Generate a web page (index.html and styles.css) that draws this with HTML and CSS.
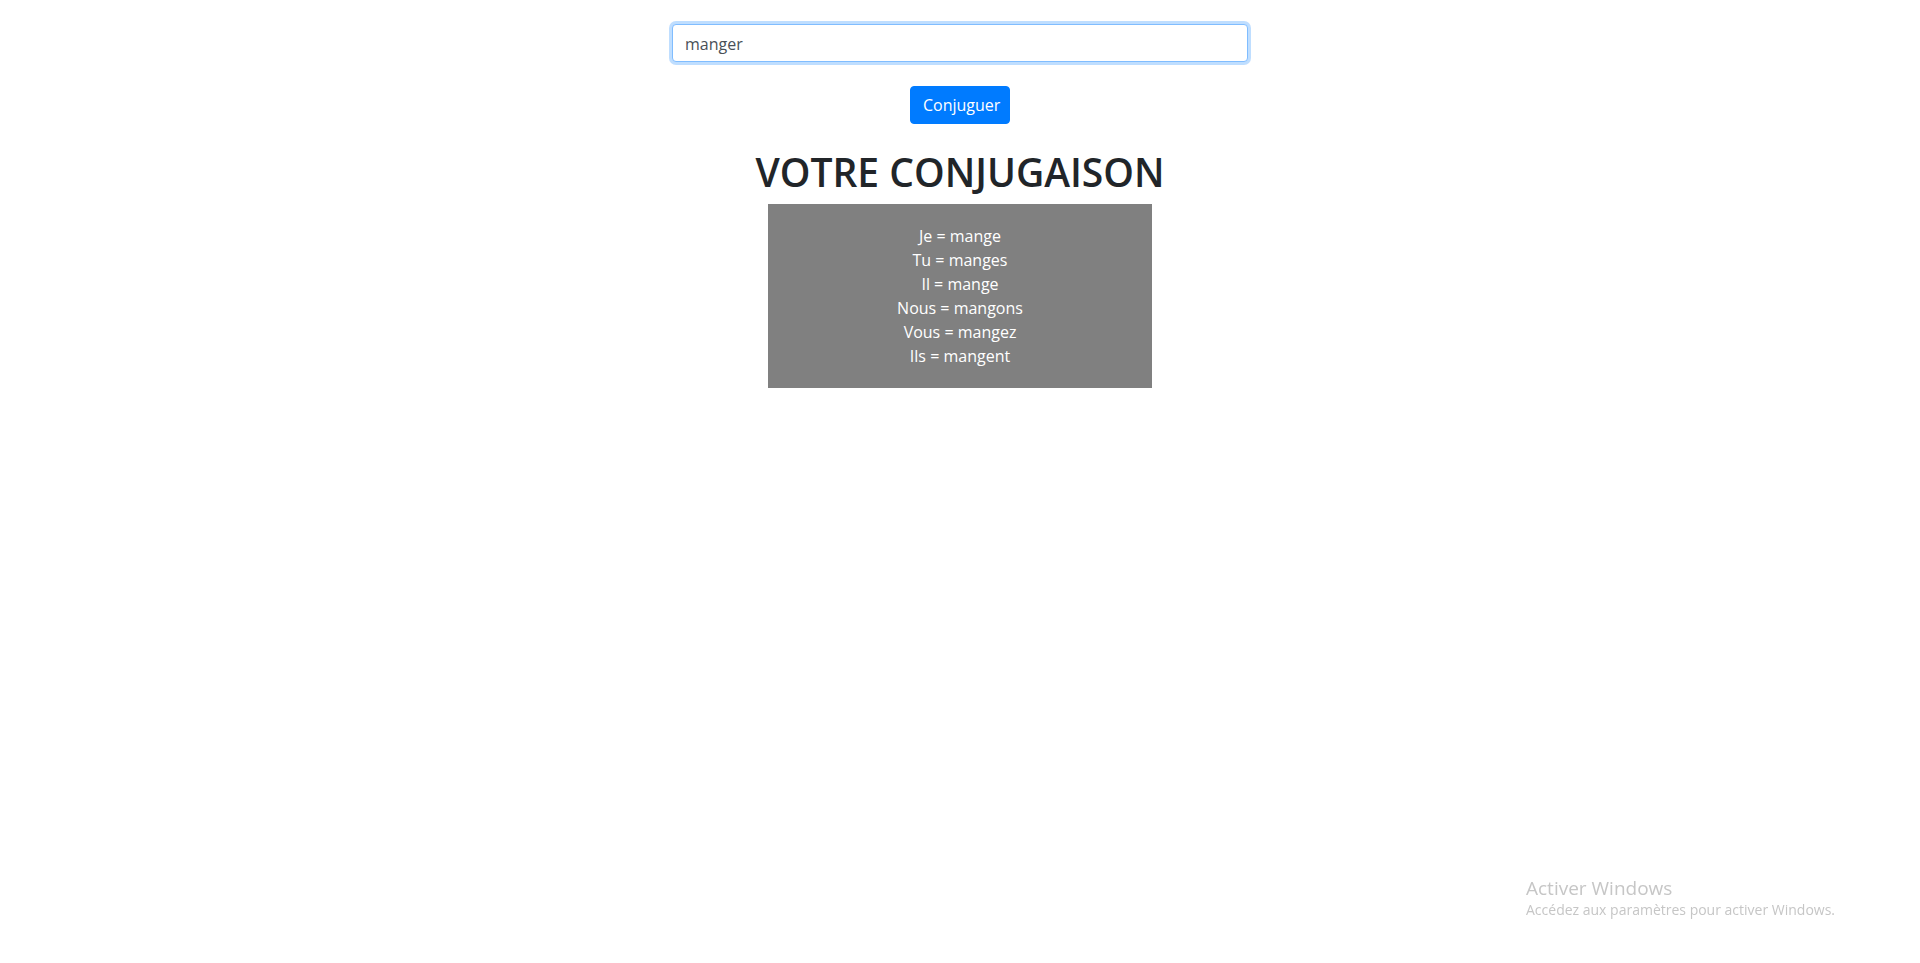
FILE: index.html
```html
<!DOCTYPE html>
<html lang="fr">
<head>
<meta charset="utf-8">
<title>Conjugaison</title>
<link rel="stylesheet" href="styles.css">
</head>
<body>
<main class="page">
  <form class="search">
    <input class="field" type="text" value="manger">
    <button class="btn" type="button">Conjuguer</button>
  </form>
  <h1 class="title">VOTRE CONJUGAISON</h1>
  <div class="result">
    <p>Je = mange</p>
    <p>Tu = manges</p>
    <p>Il = mange</p>
    <p>Nous = mangons</p>
    <p>Vous = mangez</p>
    <p>Ils = mangent</p>
  </div>
</main>
<div class="watermark">
  <div class="wm-title">Activer Windows</div>
  <div class="wm-sub">Accédez aux paramètres pour activer Windows.</div>
</div>
</body>
</html>
```
FILE: styles.css
```css
html, body {
  margin: 0;
  padding: 0;
  background: #fff;
}
body {
  font-family: "Segoe UI", "Open Sans", "Noto Sans", sans-serif;
  font-size: 16px;
  line-height: 1.5;
  color: #212529;
}
.page {
  display: flex;
  flex-direction: column;
  align-items: center;
  padding-top: 24px;
}
.search {
  width: 100%;
  display: flex;
  flex-direction: column;
  align-items: center;
  gap: 24px;
}
.field {
  box-sizing: border-box;
  width: 30%;
  height: 38px;
  padding: 7px 12px 5px;
  font-family: inherit;
  font-size: 16px;
  line-height: 1.5;
  color: #495057;
  background: #fff;
  border: 1px solid #80bdff;
  border-radius: 4px;
  box-shadow: 0 0 0 3px rgba(0, 123, 255, 0.25);
  outline: none;
}
.btn {
  box-sizing: border-box;
  width: 100px;
  height: 38px;
  padding: 6px 12px;
  font-family: inherit;
  font-size: 16px;
  line-height: 1.5;
  color: #fff;
  background: #007bff;
  border: 1px solid #007bff;
  border-radius: 4px;
}
.title {
  margin: 24px 0 8px;
  font-size: 39px;
  font-weight: 600;
  line-height: 48px;
  color: #212529;
}
.result {
  box-sizing: border-box;
  width: 20%;
  padding: 20px 0;
  background: #808080;
  color: #fff;
  text-align: center;
}
.result p {
  margin: 0;
  line-height: 24px;
}
.watermark {
  position: fixed;
  left: 1526px;
  top: 875px;
  color: #c6c6c6;
  font-family: "Segoe UI", "Open Sans", "Noto Sans", sans-serif;
}
.wm-title {
  font-size: 19px;
  line-height: 26px;
}
.wm-sub {
  font-size: 14px;
  line-height: 18px;
}
```
